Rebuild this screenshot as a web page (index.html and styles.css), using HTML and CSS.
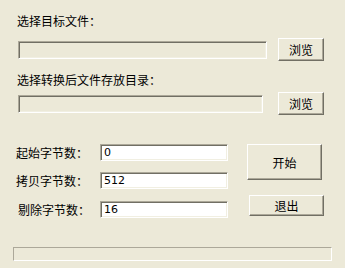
FILE: index.html
```html
<!DOCTYPE html>
<html lang="zh-CN">
<head>
<meta charset="utf-8">
<title>文件转换</title>
<link rel="stylesheet" href="styles.css">
</head>
<body>
<div class="dialog">
  <div class="label first">选择目标文件：</div>
  <div class="pick-row">
    <div class="field disabled wide1"></div>
    <div class="btn browse">浏览</div>
  </div>
  <div class="label second">选择转换后文件存放目录：</div>
  <div class="pick-row row2">
    <div class="field disabled wide2"></div>
    <div class="btn browse">浏览</div>
  </div>

  <div class="params">
    <div class="fields">
      <div class="param"><span class="plabel">起始字节数：</span><div class="field num">0</div></div>
      <div class="param"><span class="plabel">拷贝字节数：</span><div class="field num">512</div></div>
      <div class="param"><span class="plabel shift">剔除字节数：</span><div class="field num">16</div></div>
    </div>
    <div class="actions">
      <div class="btn start">开始</div>
      <div class="btn quit">退出</div>
    </div>
  </div>

  <div class="progress"></div>
</div>
</body>
</html>
```

FILE: styles.css
```css
html, body {
  margin: 0;
  padding: 0;
  background: #ECE9D8;
}
body {
  width: 345px;
  height: 268px;
  overflow: hidden;
  font-family: "SimSun", "Noto Sans CJK SC", "DejaVu Sans", sans-serif;
  font-size: 12px;
  color: #000;
}
.dialog {
  display: flex;
  flex-direction: column;
  padding: 0 0 0 16px;
}
.label {
  height: 14px;
  line-height: 14px;
  padding-left: 1px;
}
.label.first { margin-top: 14px; }
.label.second { margin-top: 12px; }
.pick-row {
  display: flex;
  align-items: center;
  height: 23px;
  margin-top: 10px;
}
.pick-row.row2 { margin-top: 5px; }
.field {
  box-sizing: border-box;
  height: 18px;
  border-style: solid;
  border-width: 1px;
  border-color: #ACA899 #FFFFFF #FFFFFF #ACA899;
  box-shadow: inset 1px 1px 0 #716F64, inset -1px -1px 0 #F1EFE2;
}
.field.disabled {
  background: #ECE9D8;
  margin-left: 2px;
}
.wide1 { width: 249px; }
.wide2 { width: 245px; }
.btn {
  box-sizing: border-box;
  display: flex;
  align-items: center;
  justify-content: center;
  background: #ECE9D8;
  border-style: solid;
  border-width: 1px;
  border-color: #FFFFFF #716F64 #716F64 #FFFFFF;
  box-shadow: inset -1px -1px 0 #ACA899;
  font-size: 12px;
}
.browse {
  width: 46px;
  height: 23px;
  margin-left: auto;
  margin-right: 21px;
}
.params {
  display: flex;
  margin-top: 29px;
}
.fields {
  display: flex;
  flex-direction: column;
  gap: 11px;
}
.param {
  display: flex;
  align-items: center;
  height: 17px;
}
.param + .param { margin-top: 0; }
.plabel {
  width: 84px;
  line-height: 14px;
}
.plabel.shift { padding-left: 2px; width: 82px; }
.field.num {
  width: 128px;
  height: 17px;
  background: #FFFFFF;
  font-family: "DejaVu Sans", "Liberation Sans", sans-serif;
  font-size: 11px;
  line-height: 15px;
  padding-left: 3px;
}
.param:nth-child(2) { margin-top: 0; }
.fields .param:nth-child(3) { margin-top: 1px; }
.actions {
  display: flex;
  flex-direction: column;
  margin-left: 19px;
}
.start {
  width: 75px;
  height: 36px;
}
.quit {
  width: 75px;
  height: 21px;
  margin-top: 15px;
  margin-left: 2px;
}
.progress {
  box-sizing: border-box;
  width: 319px;
  height: 14px;
  margin-top: 29px;
  margin-left: -3px;
  border-style: solid;
  border-width: 1px;
  border-color: #ACA899 #FFFFFF #FFFFFF #ACA899;
}
```
